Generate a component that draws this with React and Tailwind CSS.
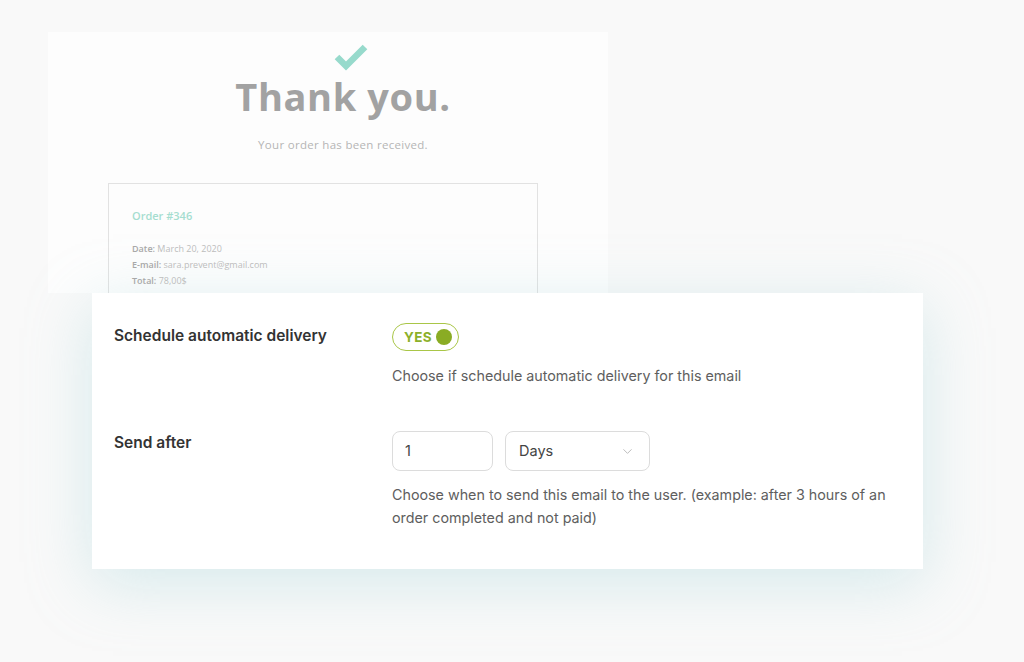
import { ChevronDown } from "lucide-react";

function ThankYouPreview() {
  return (
    <div className="ml-[48px] h-[261px] w-[560px] overflow-hidden bg-[#fdfdfd] font-['Open_Sans',sans-serif]">
      <div className="flex flex-col items-center pl-[30px] pt-[12px]">
        <svg width="36" height="28" viewBox="0 0 36 28" className="ml-[16px]">
          <path d="M4 13 L13 22 L32 3" fill="none" stroke="#97dacc" strokeWidth="6.5" />
        </svg>
        <h1 className="mt-[-2px] text-[38px] leading-[52px] font-bold tracking-[0.6px] text-[#a2a2a2]">
          Thank you.
        </h1>
        <p className="mt-[14px] text-[11.5px] tracking-[0.3px] text-[#b5b5b5]">Your order has been received.</p>
      </div>
      <div className="ml-[60px] mt-[30px] h-[200px] w-[430px] border border-[#e2e2e2] px-[23px] pt-[24px]">
        <p className="text-[11px] font-semibold text-[#a5ddd0]">Order #346</p>
        <div className="mt-[17px] flex flex-col gap-[3px] text-[9px] leading-[13px] text-[#bdbdbd]">
          <p>
            <span className="font-semibold text-[#a8a8a8]">Date:</span> March 20, 2020
          </p>
          <p>
            <span className="font-semibold text-[#a8a8a8]">E-mail:</span> sara.prevent@gmail.com
          </p>
          <p>
            <span className="font-semibold text-[#a8a8a8]">Total:</span> 78,00$
          </p>
        </div>
      </div>
    </div>
  );
}

function Toggle() {
  return (
    <div className="flex h-[28px] w-[67px] items-center rounded-full border-[1.5px] border-[#a9c647] bg-white pl-[11px] pr-[6px]">
      <span className="text-[13.5px] font-bold tracking-[0.3px] text-[#8cb02a]">YES</span>
      <span className="ml-[4px] h-[16px] w-[16px] rounded-full bg-[#8aac24]" />
    </div>
  );
}

export default function App() {
  return (
    <div className="min-h-[662px] bg-[#f9f9f9] pb-[92px] pt-[32px]">
      <ThankYouPreview />
      <div className="ml-[92px] w-[831px] bg-white pb-[40px] pl-[22px] pr-[22px] pt-[30px] font-['Inter',sans-serif] shadow-[0_14px_60px_rgba(150,205,212,0.35)]">
        <div className="grid grid-cols-[278px_1fr]">
          <p className="pt-[3px] text-[15.5px] font-semibold leading-[20px] text-[#333]">Schedule automatic delivery</p>
          <div>
            <Toggle />
            <p className="mt-[15px] text-[14.3px] leading-[20px] text-[#5e5e5e]">
              Choose if schedule automatic delivery for this email
            </p>
          </div>
        </div>
        <div className="mt-[45px] grid grid-cols-[278px_1fr]">
          <p className="pt-[2px] text-[15.5px] font-semibold leading-[20px] text-[#333]">Send after</p>
          <div>
            <div className="flex gap-[12px]">
              <div className="flex h-[40px] w-[101px] items-center rounded-[8px] border border-[#dcdcdc] pl-[12px] text-[14.5px] text-[#444]">
                1
              </div>
              <div className="flex h-[40px] w-[145px] items-center justify-between rounded-[8px] border border-[#dcdcdc] pl-[13px] pr-[14px] text-[14.5px] text-[#444]">
                <span>Days</span>
                <ChevronDown size={15} strokeWidth={1.5} className="text-[#b8b8b8]" />
              </div>
            </div>
            <p className="mt-[12px] max-w-[505px] text-[14.3px] leading-[23px] text-[#5e5e5e]">
              Choose when to send this email to the user. (example: after 3 hours of an order completed and not paid)
            </p>
          </div>
        </div>
      </div>
    </div>
  );
}
